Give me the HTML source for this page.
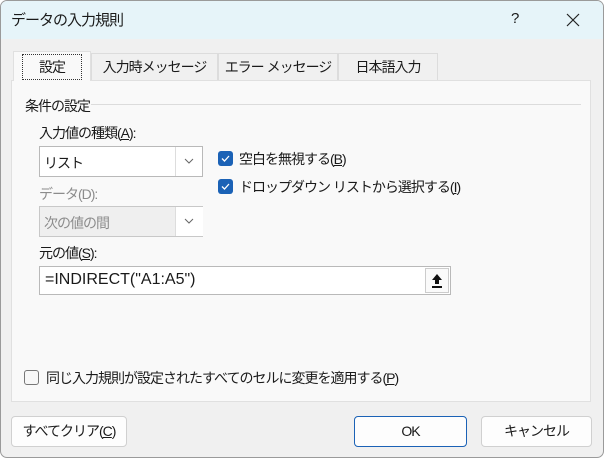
<!DOCTYPE html>
<html><head><meta charset="utf-8"><style>
*{box-sizing:border-box;margin:0;padding:0}
body{width:604px;height:458px;overflow:hidden;background:#fff;font-family:"Liberation Sans","Noto Sans CJK JP",sans-serif;font-size:14px;color:#1a1a1a;letter-spacing:-1px}
.win{position:absolute;left:0;top:0;width:604px;height:458px;background:#f0f0f0;border:1px solid #9a9a9a;border-radius:7px;overflow:hidden}
.title{position:absolute;left:0;top:0;width:604px;height:38px;background:#e6f4f9}
.abs{position:absolute;white-space:nowrap}
.tab{position:absolute;top:52px;height:27px;border:1px solid #dcdcdc;border-bottom:none;background:#f0f0f0;text-align:center;line-height:26px}
.panel{position:absolute;left:10px;top:79px;width:580px;height:322px;background:#f9f9f9;border:1px solid #e0e0e0}
.combo{position:absolute;border:1px solid #b9b9b9;background:#fff}
.cb{position:absolute;width:15px;height:15px;border-radius:3px;background:#1b62b6}
.btn{position:absolute;top:415px;height:31px;background:#fdfdfd;border:1px solid #d0d0d0;border-radius:4px;text-align:center;line-height:29px}
u{text-decoration:underline}
</style></head><body><div class="win">
<div class="title"></div>
<div class="abs" style="left:10px;top:8px;font-size:15px">データの入力規則</div>
<div class="abs" style="left:510px;top:9px;font-size:15px">?</div>
<svg class="abs" style="left:565px;top:12px" width="14" height="14"><path d="M1 1L13 13M13 1L1 13" stroke="#222" stroke-width="1.2"/></svg>
<div class="panel"></div>
<div class="tab" style="left:12px;top:50px;width:78px;height:30px;background:#f9f9f9;line-height:30px;border-color:#e0e0e0"><span style="outline:1px dotted #333;padding:4px 16px">設定</span></div>
<div class="tab" style="left:90px;width:127px">入力時メッセージ</div>
<div class="tab" style="left:217px;width:120px">エラー メッセージ</div>
<div class="tab" style="left:337px;width:100px">日本語入力</div>
<div class="abs" style="left:24px;top:95px">条件の設定</div>
<div class="abs" style="left:90px;top:103px;width:490px;height:1px;background:#dcdcdc"></div>
<div class="abs" style="left:38px;top:122px">入力値の種類(<u>A</u>):</div>
<div class="combo" style="left:38px;top:145px;width:164px;height:31px"><span class="abs" style="left:4px;top:6px">リスト</span><div class="abs" style="left:135px;top:0;width:1px;height:29px;background:#ddd"></div><svg class="abs" style="left:144px;top:11px" width="10" height="6"><path d="M1 1L5 5L9 1" stroke="#666" fill="none"/></svg></div>
<div class="abs" style="left:38px;top:183px;color:#8c8c8c">データ(D):</div>
<div class="combo" style="left:38px;top:205px;width:164px;height:31px;background:#efefef;border-color:#c8c8c8"><span class="abs" style="left:4px;top:6px;color:#8c8c8c">次の値の間</span><div class="abs" style="left:135px;top:0;width:28px;height:29px;background:#fff;border-left:1px solid #ddd"></div><svg class="abs" style="left:144px;top:11px" width="10" height="6"><path d="M1 1L5 5L9 1" stroke="#666" fill="none"/></svg></div>
<div class="cb" style="left:217px;top:150px"></div><svg class="abs" style="left:217px;top:150px" width="15" height="15"><path d="M4 7.5L6.5 10L11 5" stroke="#fff" stroke-width="1.3" fill="none"/></svg>
<div class="abs" style="left:238px;top:148px">空白を無視する(<u>B</u>)</div>
<div class="cb" style="left:217px;top:178px"></div><svg class="abs" style="left:217px;top:178px" width="15" height="15"><path d="M4 7.5L6.5 10L11 5" stroke="#fff" stroke-width="1.3" fill="none"/></svg>
<div class="abs" style="left:238px;top:176px">ドロップダウン リストから選択する(<u>I</u>)</div>
<div class="abs" style="left:38px;top:242px">元の値(<u>S</u>):</div>
<div class="combo" style="left:38px;top:265px;width:412px;height:29px"><span class="abs" style="left:5px;top:4px;font-size:16px;letter-spacing:0">=INDIRECT("A1:A5")</span><div class="abs" style="left:385px;top:1px;width:24px;height:25px;border:1px solid #ccc;background:#fafafa"></div><svg class="abs" style="left:391px;top:6px" width="12" height="16"><path d="M6 1L1 7H4V11H8V7H11Z" fill="#111"/><rect x="1" y="13" width="10" height="2" fill="#111"/></svg></div>
<div class="abs" style="left:23px;top:369px;width:15px;height:15px;border:1px solid #777;border-radius:3px;background:#f7f7f7"></div>
<div class="abs" style="left:45px;top:367px">同じ入力規則が設定されたすべてのセルに変更を適用する(<u>P</u>)</div>
<div class="btn" style="left:10px;width:116px">すべてクリア(<u>C</u>)</div>
<div class="btn" style="left:353px;width:113px;border-color:#1b62b6">OK</div>
<div class="btn" style="left:480px;width:111px">キャンセル</div>
</div></body></html>
